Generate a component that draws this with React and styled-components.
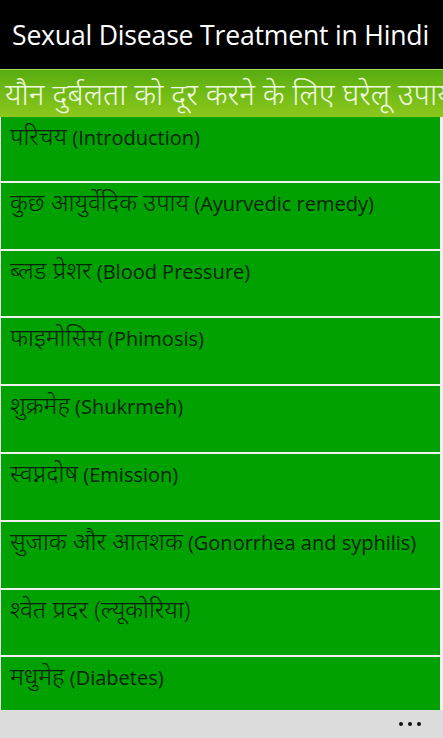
import React from 'react';
import styled, { createGlobalStyle } from 'styled-components';

const GlobalStyle = createGlobalStyle`
  html, body { margin: 0; padding: 0; background: #f2f2f2; }
  body { font-family: "Open Sans", "Noto Sans", sans-serif; }
`;

const Screen = styled.div`
  width: 443px;
  height: 738px;
  display: flex;
  flex-direction: column;
  overflow: hidden;
  background: #f0f0f0;
`;

const Header = styled.div`
  height: 69px;
  flex: none;
  background: #000;
  color: #fff;
  display: flex;
  align-items: center;
  padding-left: 12px;
  font-size: 26.6px;
  letter-spacing: -0.2px;
  white-space: nowrap;
`;

const Banner = styled.div`
  height: 48px;
  flex: none;
  background: linear-gradient(#58ad10, #8cc81c);
  border-top: 1px solid #a6d85a;
  box-sizing: border-box;
  color: #eef8dc;
  font-size: 30px;
  font-weight: 300;
  padding-left: 5px;
  white-space: nowrap;
  overflow: hidden;
  display: flex;
  align-items: center;
`;

const List = styled.div`
  flex: 1;
  display: flex;
  flex-direction: column;
  gap: 2px;
  padding: 0 3px 0 1px;
  overflow: hidden;
`;

const Item = styled.div`
  height: ${p => p.h}px;
  flex: none;
  background: #01a101;
  color: #062406;
  font-size: 20px;
  padding: 7px 0 0 9px;
  box-sizing: border-box;
  white-space: nowrap;
`;

const Hindi = styled.span`
  font-size: 24.5px;
  font-weight: 300;
  line-height: 1;
`;

const BottomBar = styled.div`
  height: 28px;
  flex: none;
  background: #dcdcdc;
  display: flex;
  justify-content: flex-end;
  align-items: center;
  padding-right: 22px;
  gap: 5px;
`;

const Dot = styled.span`
  width: 4px;
  height: 4px;
  border-radius: 50%;
  background: #111;
`;

const items = [
  ['परिचय', '(Introduction)', 64],
  ['कुछ आयुर्वेदिक उपाय', '(Ayurvedic remedy)', 66],
  ['ब्लड प्रेशर', '(Blood Pressure)', 65],
  ['फाइमोसिस', '(Phimosis)', 66],
  ['शुक्रमेह', '(Shukrmeh)', 66],
  ['स्वप्नदोष', '(Emission)', 66],
  ['सुजाक और आतशक', '(Gonorrhea and syphilis)', 66],
  ['श्वेत प्रदर (ल्यूकोरिया)', '', 65],
  ['मधुमेह', '(Diabetes)', 60],
];

export default function App() {
  return (
    <Screen>
      <GlobalStyle />
      <Header>Sexual Disease Treatment in Hindi</Header>
      <Banner>यौन दुर्बलता को दूर करने के लिए घरेलू उपाय</Banner>
      <List>
        {items.map(([hi, en, h]) => (
          <Item key={hi} h={h}>
            <Hindi>{hi}</Hindi>{en ? ' ' + en : ''}
          </Item>
        ))}
      </List>
      <BottomBar>
        <Dot />
        <Dot />
        <Dot />
      </BottomBar>
    </Screen>
  );
}
